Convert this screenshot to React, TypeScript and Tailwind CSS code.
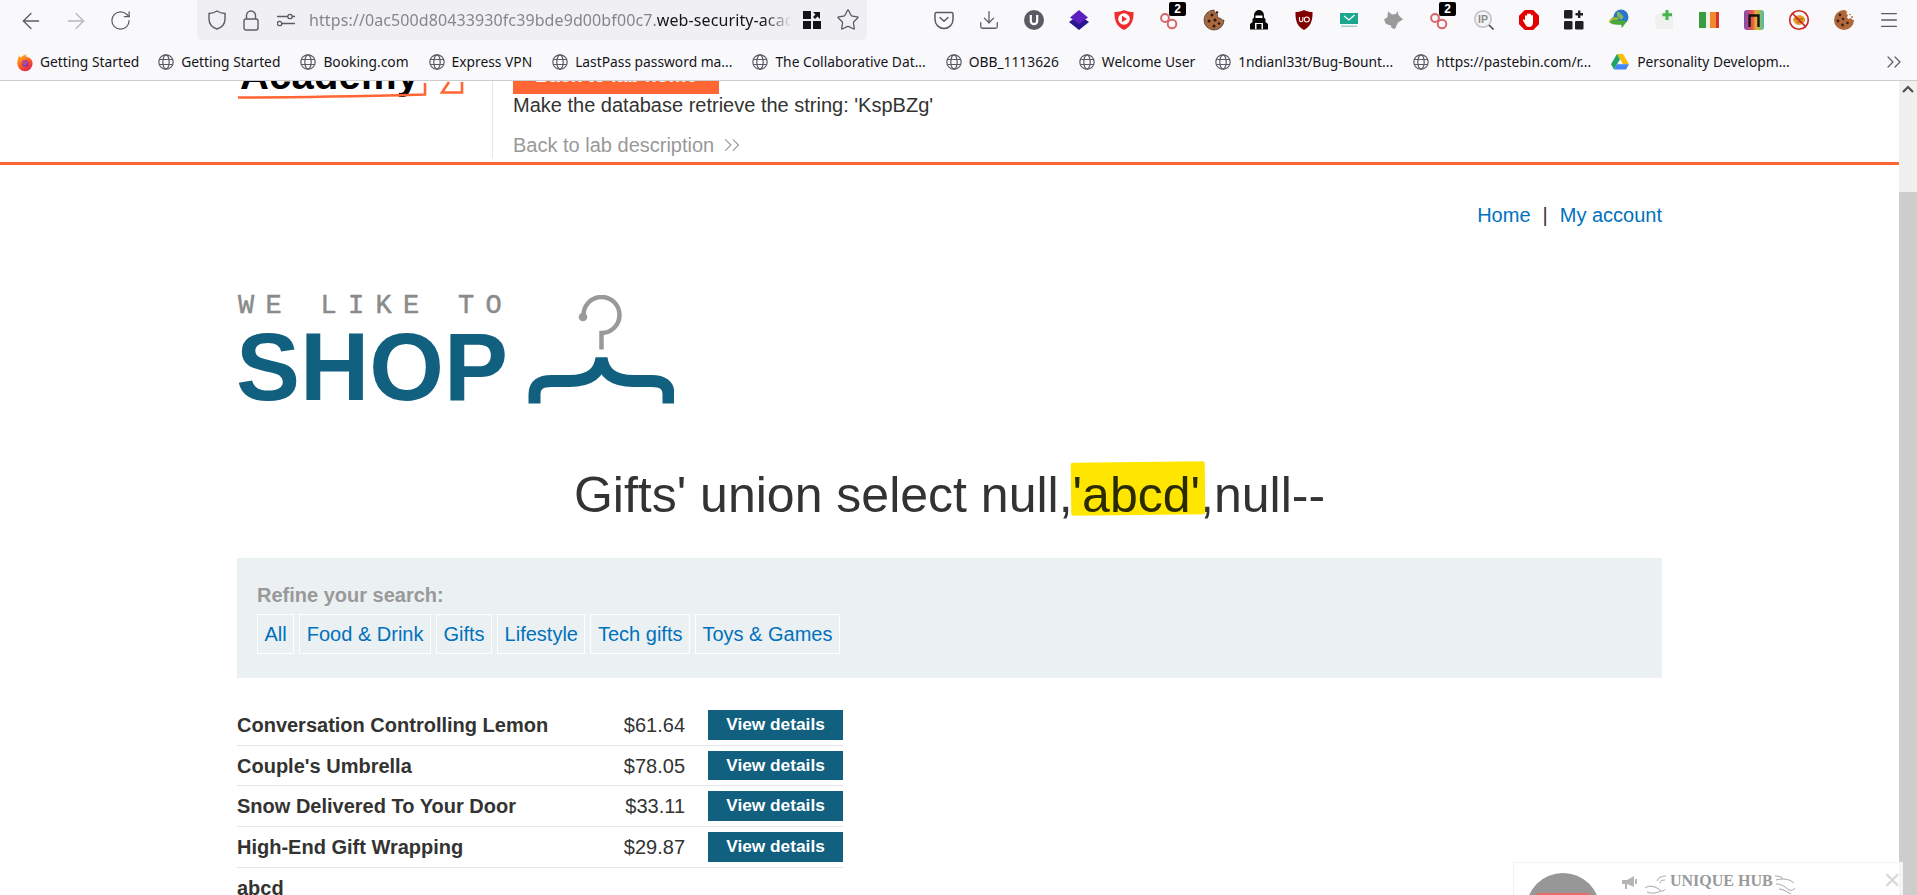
import React from "react";
import { ArrowLeft, ArrowRight, RotateCw, Star, ChevronsRight, Download, Menu } from "lucide-react";

const Sans = "font-['Liberation_Sans',Arial,sans-serif]";

function Globe() {
  return (
    <svg width="16" height="16" viewBox="0 0 16 16" fill="none" stroke="#5b5b66" strokeWidth="1.2" className="shrink-0">
      <circle cx="8" cy="8" r="7.2" />
      <ellipse cx="8" cy="8" rx="3.2" ry="7.2" />
      <path d="M1 5.5h14M1 10.5h14" />
    </svg>
  );
}

function Firefox() {
  return (
    <svg width="18" height="19" viewBox="0 0 18 19" className="shrink-0">
      <defs>
        <linearGradient id="ff" x1="0" y1="0" x2="0.6" y2="1">
          <stop offset="0" stopColor="#ffcb2e" />
          <stop offset="0.5" stopColor="#ff6a1f" />
          <stop offset="1" stopColor="#e5274d" />
        </linearGradient>
      </defs>
      <path d="M3 2.5C3.5 4 4.4 4.4 5.4 4c1.6-1.6 3.8-2.6 5.4-2.4C9.6 2.6 9.8 3.4 11 4c3 .6 5.6 2.6 5.6 6.5A7.6 7.6 0 0 1 9 18.2a7.8 7.8 0 0 1-7.7-7.7C1.3 7.5 2 4.5 3 2.5z" fill="url(#ff)" />
      <circle cx="9.2" cy="10.5" r="3.3" fill="#7b2bc4" />
      <path d="M6 8.8c1.5-1 4-1.2 6 .3-1 2.5-2 3.7-3.5 3.7S5.500 10.800 6 8.800z" fill="#ff8a3c" opacity=".4" />
    </svg>
  );
}

function Drive() {
  return (
    <svg width="18" height="16" viewBox="0 0 18 16" className="shrink-0">
      <path d="M6 0h6l6 10.3h-6z" fill="#fbbc04" />
      <path d="M6 0 0 10.3l3 5.2 6-10.3z" fill="#1fa463" />
      <path d="M6 10.3h12l-3 5.2H3z" fill="#4285f4" />
    </svg>
  );
}

const Ico = ({ children }: { children: React.ReactNode }) => (
  <svg width="22" height="22" viewBox="0 0 22 22" fill="none">{children}</svg>
);

const Rings = () => (
  <Ico>
    <circle cx="7" cy="9" r="3.9" stroke="#d8666b" strokeWidth="2" />
    <circle cx="14" cy="15" r="4.3" stroke="#d8666b" strokeWidth="2" />
  </Ico>
);

const Cookie1 = () => (
  <Ico>
    <path d="M11 1a10 10 0 1 0 10 10c-1.5.5-3-.3-3.3-1.8C15.8 9.5 14 8 14.5 5.8 12.8 5.4 11.5 3 11 1z" fill="#a9693f" stroke="#3a2a20" strokeWidth=".7" />
    <circle cx="9" cy="6" r="1.5" fill="#2a1c14" />
    <circle cx="6" cy="12" r="1.5" fill="#2a1c14" />
    <circle cx="12" cy="11" r="1.6" fill="#2a1c14" />
    <circle cx="11" cy="17" r="1.5" fill="#2a1c14" />
    <circle cx="16" cy="14.5" r="1.3" fill="#2a1c14" />
    <circle cx="14" cy="3.5" r="1.3" fill="#2a1c14" />
  </Ico>
);

const icons: React.ReactNode[] = [
  <Ico key="pocket">
    <path d="M3.5 3.5h15A1.5 1.5 0 0 1 20 5v5.5a9 9 0 0 1-18 0V5a1.5 1.5 0 0 1 1.5-1.5z" stroke="#5b5b66" strokeWidth="1.5" />
    <path d="m7 8.5 4 3.8 4-3.8" stroke="#5b5b66" strokeWidth="1.5" strokeLinecap="round" strokeLinejoin="round" />
  </Ico>,
  <Download key="dl" size={22} strokeWidth={1.4} color="#5b5b66" />,
  <Ico key="u">
    <circle cx="11" cy="11" r="10" fill="#5b5b66" />
    <path d="M7.8 6v6a3.2 3.2 0 0 0 6.4 0V6" stroke="#fff" strokeWidth="2.2" />
  </Ico>,
  <Ico key="layers">
    <path d="M11 6 21 13l-10 8L1 13z" fill="#2a1690" />
    <path d="M11 1l9 7.5-9 6.5-9-6.5z" fill="#5d1fc0" />
  </Ico>,
  <Ico key="yt">
    <path d="M11 1c3 1.5 6 2 9.5 2 .3 8-2 14.5-9.5 18C3.5 17.5 1.2 11 1.5 3 5 3 8 2.5 11 1z" fill="#ef2b2d" />
    <circle cx="11" cy="10" r="5.8" fill="#fff" />
    <path d="M9 6.8v6.4l5-3.2z" fill="#ef2b2d" />
  </Ico>,
  <Rings key="r1" />,
  <Cookie1 key="c1" />,
  <Ico key="hack">
    <path d="M11 1c3 0 5 2.5 5 5.5v2l1.5 1.5v3l2.5 2v5.500H2V15l2.5-2v-3L6 8.500v-2C6 3.500 8 1 11 1z" fill="#0a0a0a" />
    <rect x="7.5" y="6.5" width="7" height="2.5" fill="#fff" />
    <path d="M7 14h8v6H7z" fill="#fff" />
    <path d="M8.5 15h5v5h-5z" fill="#0a0a0a" />
  </Ico>,
  <Ico key="ub">
    <path d="M11 1c3 1.5 5.5 2 8.5 2 .3 8-1.5 14.5-8.5 18C4 17.5 2.2 11 2.5 3c3 0 5.5-.5 8.500-2z" fill="#800000" />
    <path d="M6.5 8v3a1.7 1.7 0 0 0 3.4 0V8" stroke="#fff" strokeWidth="1.1" />
    <circle cx="13.8" cy="10.5" r="2.5" stroke="#fff" strokeWidth="1.1" />
  </Ico>,
  <Ico key="mail">
    <rect x="2" y="4" width="18" height="11" fill="#1aa68f" />
    <path d="m6 7 5 4 5.5-5" stroke="#fff" strokeWidth="1.3" />
    <rect x="3" y="16.5" width="16" height="1.5" fill="#9fcfc6" />
  </Ico>,
  <Ico key="wolf">
    <path d="M5 2.5 9 5.500l4-.5 1.500-3 1 4 4.500 4.500-5 3-3 6.500-3.500-1-.5-2.500-5-1.500L1 10.500 4.500 8z" fill="#9a9a9a" />
  </Ico>,
  <Rings key="r2" />,
  <Ico key="ip">
    <circle cx="10" cy="10" r="8.2" fill="#f4f4f4" stroke="#c3c8cc" strokeWidth="1.8" />
    <path d="m16 16 4.5 4.5" stroke="#444" strokeWidth="1.6" />
    <text x="10" y="14" textAnchor="middle" fontSize="10.5" fontWeight="700" fill="#8a8a8a" fontFamily="Liberation Sans">IP</text>
  </Ico>,
  <Ico key="stop">
    <path d="M6.8 1h8.4L21 6.8v8.4L15.2 21H6.8L1 15.2V6.8z" fill="#e30000" />
    <path d="M7 11V7.2a1 1 0 0 1 2 0V5.500a1 1 0 0 1 2 0 1 1 0 0 1 2 0V7a1 1 0 0 1 2 0v6.500c0 3-2 4.500-4 4.500s-3-1-4-3l-2-3.200c-.5-1 .8-1.800 1.500-1z" fill="#fff" />
  </Ico>,
  <Ico key="grid">
    <rect x="1" y="1" width="8.5" height="8.5" rx="1.3" fill="#1f1f24" />
    <rect x="1" y="12" width="8.5" height="8.5" rx="1.3" fill="#1f1f24" />
    <rect x="12" y="12" width="8.5" height="8.5" rx="1.3" fill="#1f1f24" />
    <path d="M16.2 1.5V9M12.5 5.2H20" stroke="#1f1f24" strokeWidth="2.4" />
  </Ico>,
  <Ico key="idm">
    <circle cx="13" cy="8" r="7.5" fill="#2b74c9" />
    <path d="M9 3c3-1 3 2 5 3s2 3 0 4-4-1-5-3z" fill="#7bb661" />
    <path d="M1 13c2-5 6-6 10-4.500L9 11l10 1-5 7-1-3.500C9 16 4 16 1 13z" fill="#4aa83a" />
    <path d="M1 13c2-3 6-4 9-3" stroke="#f2c230" strokeWidth="1.3" />
  </Ico>,
  <Ico key="plus">
    <path d="M2 6l9-3h9v17H3z" fill="#eef1ee" />
    <path d="M14 1v10M9.5 5.800h9.500" stroke="#45b649" strokeWidth="3" />
  </Ico>,
  <Ico key="flag">
    <rect x="1" y="3" width="7" height="16" fill="#3a9b45" />
    <rect x="8" y="3" width="4" height="16" fill="#f1efe6" />
    <rect x="12" y="3" width="6" height="16" fill="#f08a2c" />
    <rect x="18" y="3" width="3" height="16" fill="#d9332b" />
  </Ico>,
  <div key="rainbow" className="relative flex h-[20px] w-[20px] items-center justify-center rounded-[3px] bg-[linear-gradient(to_right,#7a4fa8_0%,#c24a8a_22%,#e4573d_42%,#f2a93b_60%,#8cc152_80%,#4fb0c6_100%)]">
    <svg width="12" height="13" viewBox="0 0 12 13" fill="none">
      <path d="M1.5 13V1.5h9V13" stroke="#141414" strokeWidth="2.4" />
    </svg>
  </div>,
  <Ico key="noads">
    <path d="M5 10c2-4 8-5 11-2 2 3 1 5-2 7s-8 1-9-5z" fill="#e8962a" />
    <path d="M7 10h8M9 13h5" stroke="#8a5a16" strokeWidth="1" />
    <circle cx="11" cy="11" r="9.3" stroke="#cf1f1f" strokeWidth="1.6" />
    <path d="m4.5 4.5 13 13" stroke="#cf1f1f" strokeWidth="1.6" />
  </Ico>,
  <Ico key="c2">
    <path d="M11 1a10 10 0 1 0 10 10l-2-.5-1-1.500-2.500 1L14 8.500l1-2.500-1.500-1L14 2.500C13 1.500 12 1 11 1z" fill="#b0683a" />
    <circle cx="7" cy="6" r="1.4" fill="#3a2418" />
    <circle cx="5" cy="12" r="1.4" fill="#3a2418" />
    <circle cx="10" cy="10" r="1.3" fill="#3a2418" />
    <circle cx="9.5" cy="16" r="1.4" fill="#3a2418" />
    <circle cx="14.5" cy="14" r="1.3" fill="#3a2418" />
    <circle cx="19" cy="8" r=".9" fill="#b0683a" />
    <circle cx="17" cy="5.5" r=".8" fill="#b0683a" />
  </Ico>,
  <Menu key="menu" size={22} strokeWidth={1.5} color="#5b5b66" />,
];

const bookmarks = [
  "Getting Started",
  "Booking.com",
  "Express VPN",
  "LastPass password ma...",
  "The Collaborative Dat...",
  "OBB_1113626",
  "Welcome User",
  "1ndianl33t/Bug-Bount...",
  "https://pastebin.com/r...",
];

const categories = ["All", "Food & Drink", "Gifts", "Lifestyle", "Tech gifts", "Toys & Games"];

const products = [
  ["Conversation Controlling Lemon", "$61.64"],
  ["Couple's Umbrella", "$78.05"],
  ["Snow Delivered To Your Door", "$33.11"],
  ["High-End Gift Wrapping", "$29.87"],
];

function Toolbar() {
  return (
    <div className="flex h-[44px] items-start bg-[#f9f9fb] pl-[8px]">
      <div className="flex h-[41px] items-center text-[#5b5b66]">
        <span className="flex w-[45px] justify-center"><ArrowLeft size={26} strokeWidth={1.2} /></span>
        <span className="flex w-[45px] justify-center text-[#b6b6bc]"><ArrowRight size={26} strokeWidth={1.2} /></span>
        <span className="flex w-[45px] justify-center"><RotateCw size={23} strokeWidth={1.3} /></span>
      </div>
      <div className="ml-[54px] flex h-[40px] w-[670px] items-center rounded-b-[6px] bg-[#f0f0f4] text-[#5b5b66]">
        <svg width="18" height="20" viewBox="0 0 18 20" fill="none" stroke="#5b5b66" strokeWidth="1.4" className="ml-[11px]">
          <path d="M9 1c2.3 1.5 5 2.3 8 2.5V9c0 4.8-3 8.3-8 10C4 17.3 1 13.8 1 9V3.5C4 3.3 6.7 2.5 9 1z" />
        </svg>
        <svg width="16" height="21" viewBox="0 0 16 21" fill="none" stroke="#5b5b66" strokeWidth="1.4" className="ml-[17px]">
          <rect x="1" y="9" width="14" height="11" rx="2" />
          <path d="M3.5 9V5.5a4.5 4.5 0 0 1 9 0V9" />
        </svg>
        <svg width="18" height="14" viewBox="0 0 18 14" fill="none" stroke="#5b5b66" strokeWidth="1.3" className="ml-[18px]">
          <path d="M0 3.5h11M15 3.5h3M4 10.5h14" />
          <circle cx="13" cy="3.5" r="2.2" />
          <circle cx="2.6" cy="10.5" r="2.2" />
        </svg>
        <div className="ml-[14px] w-[483px] overflow-hidden whitespace-nowrap font-['Noto_Sans',sans-serif] text-[16px] tracking-[0.1px] text-[#85858c] [mask-image:linear-gradient(to_right,black_94%,transparent)]">
          https://0ac500d80433930fc39bde9d00bf00c7.<span className="text-[#15141a]">web-security-academy.net</span>
        </div>
        <svg width="18" height="18" viewBox="0 0 18 18" className="ml-[11px]" fill="#15141a">
          <rect x="0" y="0" width="8" height="8" />
          <rect x="0" y="10" width="8" height="8" />
          <rect x="10" y="10" width="8" height="8" />
          <path d="M10 1h7v7l-2.5-2.5L12 8l-2-2 2.5-2.5z" />
        </svg>
        <Star size={24} strokeWidth={1.3} className="ml-[15px]" />
      </div>
      <div className="ml-[54px] flex h-[40px] items-center">
        {icons.map((icon, i) => (
          <span key={i} className="relative flex w-[45px] justify-center">
            {icon}
            {(i === 5 || i === 11) && (
              <span className={`${Sans} absolute left-[23px] top-[-7px] flex h-[14px] w-[17px] items-center justify-center rounded-[2px] bg-black text-[12px] font-bold leading-none text-white`}>2</span>
            )}
          </span>
        ))}
      </div>
    </div>
  );
}

function Bookmarks() {
  return (
    <div className="flex h-[37px] items-center border-b border-[#cccccc] bg-[#f9f9fb] pl-[16px] font-['Noto_Sans',sans-serif] text-[13.8px] text-[#15141a]">
      <div className="flex items-center gap-[6px]"><Firefox /><span>Getting Started</span></div>
      <div className="flex flex-1 items-center gap-[20px] pl-[19px]">
        {bookmarks.map((b) => (
          <div key={b} className="flex items-center gap-[7px] whitespace-nowrap"><Globe /><span>{b}</span></div>
        ))}
        <div className="flex items-center gap-[8px] whitespace-nowrap"><Drive /><span>Personality Developm...</span></div>
      </div>
      <ChevronsRight size={24} strokeWidth={1.2} className="mr-[11px] text-[#5b5b66]" />
    </div>
  );
}

function LabHeader() {
  return (
    <div className="flex h-[84px] shrink-0 overflow-hidden border-b-[3px] border-[#ff6633] bg-white pl-[237px]">
      <div className="relative w-[255px] shrink-0">
        <div className="-mt-[31px] ml-[3px] text-[40px] font-bold leading-[50px] tracking-[0.2px] text-black">Academy</div>
        <svg width="230" height="20" viewBox="0 0 230 20" fill="none" className="absolute left-0 top-0">
          <path d="M1 16.500C60 16.500 130 15 188 13.500V2" stroke="#ff6633" strokeWidth="2.6" />
          <path d="M212 1l-7 10.500h20V1" stroke="#ff6633" strokeWidth="2.6" />
        </svg>
      </div>
      <div className="h-[77px] border-l border-[#e6e6e6] pl-[20px] text-[20px] text-[#333332]">
        <div className="-mt-[20px] flex h-[33px] w-[206px] items-center justify-center bg-[#ff6633] pb-[4px] text-[19.6px] font-bold text-white">Back to lab home</div>
        <div className="leading-[22px]">Make the database retrieve the string: 'KspBZg'</div>
        <div className="mt-[16px] flex items-center gap-[5px] leading-[22px] text-[#999999]">
          Back to lab description
          <ChevronsRight size={26} strokeWidth={1} />
        </div>
      </div>
    </div>
  );
}

function Logo() {
  return (
    <div className="flex items-end">
      <div className="w-[291px] shrink-0">
        <div className="ml-[1px] h-[33px] whitespace-nowrap font-['Liberation_Mono',monospace] text-[27px] leading-[26px] tracking-[11.3px] text-[#8b8b8b] [-webkit-text-stroke:0.5px_#8b8b8b]">WE LIKE TO</div>
        <div className="-ml-[1px] h-[79px] text-[96px] font-bold leading-[82px] text-[#11607f]">SHOP</div>
      </div>
      <svg width="146" height="109" viewBox="528 295 146 109" fill="none" className="mb-[1px]">
        <circle cx="583" cy="317" r="4.3" fill="#999999" />
        <path d="M583.5 315a18 18 0 1 1 18 18V349.5" stroke="#999999" strokeWidth="4.5" />
        <path d="M534.5 403.5V394c0-9 6-13 17-13h18c20 0 30-8 32-23 2 15 12 23 32 23h18c11 0 17 4 17 13v9.5" stroke="#11607f" strokeWidth="12" />
      </svg>
    </div>
  );
}

function Widget() {
  return (
    <div className="absolute right-[14px] bottom-0 flex h-[33px] w-[390px] overflow-hidden border-l border-t border-[#f3f3f3] bg-white/80 font-['Liberation_Serif',serif]">
      <div className="relative ml-[12px] mt-[10px] h-[74px] w-[74px] shrink-0 rounded-full bg-[#979797]">
        <div className={`${Sans} absolute left-[11px] top-[20px] h-[16px] w-[52px] bg-[#e86a6a] text-center text-[11px] font-bold leading-[16px] text-white`}>UNIQUE</div>
      </div>
      <svg width="16" height="14" viewBox="0 0 16 14" fill="#b5b5b5" className="ml-[22px] mt-[13px]">
        <path d="M0 4h5l7-4v11L5 8v5H3V8H0z" />
        <rect x="13" y="3" width="2" height="5" />
      </svg>
      <svg width="24" height="20" viewBox="0 0 24 20" fill="none" stroke="#a5a5a5" strokeWidth="1" className="ml-[6px] mt-[12px]">
        <path d="M22 1c-5 0-8 2-9 5M21 5c-3 0-5 1-5 3M1 13c4-3 10-2 15 2 2 2 4 1 5-1M3 17c5 2 10 1 14-1" />
      </svg>
      <div className="ml-[2px] mt-[8px] whitespace-nowrap text-[16px] font-bold leading-[20px] text-[#9a9a9a]">UNIQUE HUB</div>
      <svg width="24" height="20" viewBox="0 0 24 20" fill="none" stroke="#a5a5a5" strokeWidth="1" className="mt-[12px]">
        <path d="M2 1c4 0 7 1 8 3M3 5c6-2 14-1 18 3M3 9c5 0 8 2 13 6 2 1 5 0 6-2M6 14c4 0 8 3 12 5" />
      </svg>
      <div className={`${Sans} absolute right-[2px] top-[7px] text-[22px] font-thin leading-[22px] text-[#d9d9d9]`}>✕</div>
    </div>
  );
}

export default function App() {
  return (
    <div className={`${Sans} relative flex h-[895px] w-[1917px] flex-col overflow-hidden bg-white text-[20px] text-[#333332]`}>
      <div className="font-['Noto_Sans',sans-serif]">
        <Toolbar />
        <Bookmarks />
      </div>
      <div className="flex min-h-0 flex-1">
        <div className="min-w-0 flex-1 overflow-hidden">
          <LabHeader />
          <main className="px-[237px]">
            <div className="flex justify-end pt-[38px] leading-[24px] text-[#0071bc]">
              <span>Home</span>
              <span className="mx-[12px] text-[#333332]">|</span>
              <span>My account</span>
            </div>
            <div className="mt-[66px]"><Logo /></div>
            <h1 className="mt-[50px] text-center text-[50px] font-normal leading-[80px]">
              Gifts' union select null,<span className="relative"><span className="absolute left-[-2px] right-[-4px] top-[-5px] bottom-[8px] -rotate-[0.6deg] rounded-[2px] bg-[#ffe600]"></span><span className="relative text-[#2b2b00]">'abcd'</span></span>,null--
            </h1>
            <div className="mt-[23px] h-[120px] bg-[#ebf0f2] px-[20px] pt-[25px]">
              <div className="h-[31px] font-bold leading-[24px] text-[#999999]">Refine your search:</div>
              <div className="flex gap-[5px]">
                {categories.map((c) => (
                  <span key={c} className="flex h-[40px] items-center border border-white px-[6.5px] text-[#0071bc]">{c}</span>
                ))}
              </div>
            </div>
            <div className="mt-[27px] w-[606px]">
              {products.map(([name, price]) => (
                <div key={name} className="flex h-[40.7px] items-center border-b border-[#e6e6e6]">
                  <span className="flex-1 font-bold">{name}</span>
                  <span>{price}</span>
                  <span className="ml-[23px] flex h-[29.5px] w-[135px] items-center justify-center bg-[#11607f] text-[17.3px] font-bold text-white">View details</span>
                </div>
              ))}
              <div className="pt-[8px] font-bold leading-[24px]">abcd</div>
            </div>
          </main>
        </div>
        <div className="w-[18px] shrink-0 bg-[#f0f0f0]">
          <div className="flex h-[111px] items-start justify-center pt-[4px]">
            <svg width="12" height="8" viewBox="0 0 12 8" fill="none" stroke="#505050" strokeWidth="2.2"><path d="m1 7 5-5 5 5" /></svg>
          </div>
          <div className="h-[703px] bg-[#cdcdcd]"></div>
        </div>
      </div>
      <Widget />
    </div>
  );
}
